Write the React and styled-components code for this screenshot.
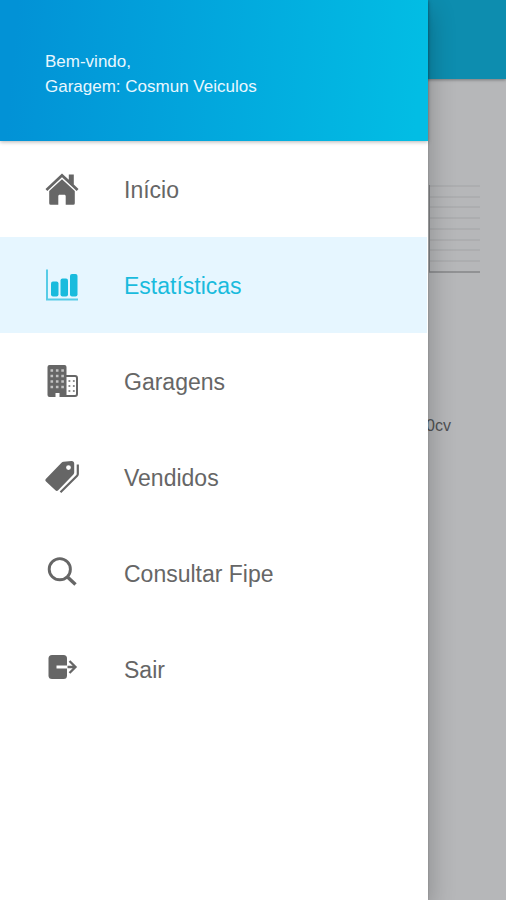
import React, { useState } from "react"
import styled, { createGlobalStyle } from "styled-components"

const GlobalStyle = createGlobalStyle`
  *, *::before, *::after {
    box-sizing: border-box;
  }

  body {
    margin: 0;
    background-color: #b6b7b9;
    font-family: "Liberation Sans", Arial, sans-serif;
  }
`

const Screen = styled.div`
  position: relative;
  min-height: 100vh;
  overflow: hidden;
`

const TopBar = styled.header`
  height: 79px;
  background-color: #0d8daf;
  box-shadow: 0 1px 3px rgba(0, 0, 0, 0.35);
`

const Content = styled.main`
  display: flex;
  flex-direction: column;
  gap: 143px;
  padding: 106px 26px 0;
`

const Chart = styled.svg`
  display: block;
  width: 100%;
  height: 88px;
`

const Power = styled.p`
  margin: 0;
  padding-right: 29px;
  color: #505254;
  font-size: 16px;
  line-height: 20px;
  text-align: right;
`

const Drawer = styled.aside`
  position: absolute;
  top: 0;
  bottom: 0;
  left: 0;
  right: 78px;
  background-color: #fff;
  box-shadow: 0 0 2px rgba(0, 0, 0, 0.2), 2px 10px 24px rgba(0, 0, 0, 0.24);
`

const Welcome = styled.div`
  display: flex;
  flex-direction: column;
  justify-content: center;
  height: 141px;
  padding: 6px 45px 0;
  background: linear-gradient(95deg, #0292d6 4%, #02bde4 97%);
  box-shadow: 0 1px 4px rgba(0, 0, 0, 0.3);
  color: #e9f7fe;
  font-size: 17px;
  line-height: 25px;

  p {
    margin: 0;
  }
`

const Menu = styled.nav`
  padding-right: 1px;
`

const MenuItem = styled.button`
  display: flex;
  align-items: center;
  gap: 44px;
  width: 100%;
  height: 96px;
  padding: 0 44px;
  border: 0;
  background-color: ${({ $active }) => ($active ? "#e6f6ff" : "transparent")};
  color: ${({ $active }) => ($active ? "#19bbdd" : "#666")};
  font-family: inherit;
  font-size: 23px;
  text-align: left;
  cursor: pointer;

  svg {
    flex: none;
    width: 36px;
    height: 36px;
  }

  span {
    padding-top: 2px;
  }
`

const HomeIcon = () => (
  <svg viewBox="0 0 36 36" fill="currentColor" aria-hidden="true">
    <path d="M18 2.5 1.500 18l1.800 1.900L18 6.300l14.700 13.600 1.800-1.900-4.700-4.400V3.500h-5v5.300z" />
    <path d="M18 8.300 5.200 20v12.200a1.500 1.500 0 0 0 1.500 1.500h7.600v-8.500c0-.8.6-1.400 1.400-1.400h4.600c.8 0 1.400.6 1.400 1.400v8.500h7.600a1.500 1.500 0 0 0 1.500-1.500V20z" />
  </svg>
)

const StatsIcon = () => (
  <svg viewBox="0 0 36 36" fill="currentColor" aria-hidden="true">
    <path d="M3 2.500v30h31" fill="none" stroke="currentColor" strokeWidth="2" opacity="0.7" />
    <rect x="7" y="14.500" width="7.500" height="15" rx="2" />
    <rect x="16.500" y="11.500" width="7.500" height="18" rx="2" />
    <rect x="26" y="7" width="7.500" height="22.500" rx="2" />
  </svg>
)

const BuildingIcon = () => (
  <svg viewBox="0 0 36 36" fill="currentColor" aria-hidden="true">
    <path d="M5.500 2h15a2 2 0 0 1 2 2v30h-7v-4h-4v4h-6a2 2 0 0 1-2-2V4a2 2 0 0 1 2-2z" />
    <path d="M22 13h9a2 2 0 0 1 2 2v16a2 2 0 0 1-2 2h-9" fill="none" stroke="currentColor" strokeWidth="2" />
    <path
      d="M6.500 7.500h14M6.500 13h14M6.500 18.500h14M6.500 24h14"
      stroke="#fff"
      strokeWidth="2.600"
      strokeDasharray="2.600 2.800"
      opacity="0.6"
    />
    <path
      d="M24.500 18h7M24.500 23h7M24.500 28h7"
      stroke="currentColor"
      strokeWidth="2"
      strokeDasharray="1.800 2.600"
      opacity="0.75"
    />
  </svg>
)

const TagsIcon = () => (
  <svg viewBox="0 0 36 36" fill="currentColor" aria-hidden="true">
    <path
      fillRule="evenodd"
      d="M19.500 2.800 27.500 2c1.600-.1 2.700 1 2.700 2.600v8.900c0 .8-.3 1.500-.8 2L14.200 31.200c-.9.9-1.900.9-2.800 0L2 22.500c-.9-.9-.9-1.900 0-2.800L17.500 3.800c.6-.6 1.200-.9 2-1zM24.500 6.200a2.400 2.400 0 1 0 0 4.800 2.400 2.400 0 0 0 0-4.800z"
    />
    <path
      d="M33.800 5.500V15c0 .7-.2 1.200-.7 1.700L16.500 33.300"
      fill="none"
      stroke="currentColor"
      strokeWidth="2.200"
    />
  </svg>
)

const SearchIcon = () => (
  <svg viewBox="0 0 36 36" fill="none" stroke="currentColor" aria-hidden="true">
    <circle cx="15.800" cy="14.200" r="10.600" strokeWidth="2.900" />
    <path d="m23.500 22 8 7.500" strokeWidth="3.400" />
  </svg>
)

const ExitIcon = () => (
  <svg viewBox="0 0 36 36" aria-hidden="true">
    <rect x="4.500" y="4" width="18.500" height="24" rx="3.500" fill="currentColor" />
    <path d="M12.500 16h11" stroke="#fff" strokeWidth="3" />
    <path
      d="M23.500 16H31M25.500 10l6 6-6 6"
      fill="none"
      stroke="currentColor"
      strokeWidth="2.300"
    />
  </svg>
)

const menu = [
  { label: "Início", Icon: HomeIcon },
  { label: "Estatísticas", Icon: StatsIcon },
  { label: "Garagens", Icon: BuildingIcon },
  { label: "Vendidos", Icon: TagsIcon },
  { label: "Consultar Fipe", Icon: SearchIcon },
  { label: "Sair", Icon: ExitIcon },
]

const gridLines = [1, 12, 22, 33, 44, 55, 65, 76]

export default function App() {
  const [active, setActive] = useState("Estatísticas")

  return (
    <Screen>
      <GlobalStyle />
      <TopBar />
      <Content>
        <Chart viewBox="0 0 454 88" preserveAspectRatio="xMaxYMin slice" aria-hidden="true">
          {gridLines.map(y => (
            <path key={y} d={`M403 ${y}h51`} stroke="#a3a4a6" />
          ))}
          <path d="M403.500 0v87" stroke="#858688" />
          <path d="M403 87h51" stroke="#858688" strokeWidth="1.500" />
        </Chart>
        <Power>150cv</Power>
      </Content>
      <Drawer>
        <Welcome>
          <p>Bem-vindo,</p>
          <p>Garagem: Cosmun Veiculos</p>
        </Welcome>
        <Menu>
          {menu.map(({ label, Icon }) => (
            <MenuItem
              key={label}
              type="button"
              $active={label === active}
              aria-current={label === active ? "page" : undefined}
              onClick={() => setActive(label)}
            >
              <Icon />
              <span>{label}</span>
            </MenuItem>
          ))}
        </Menu>
      </Drawer>
    </Screen>
  )
}
